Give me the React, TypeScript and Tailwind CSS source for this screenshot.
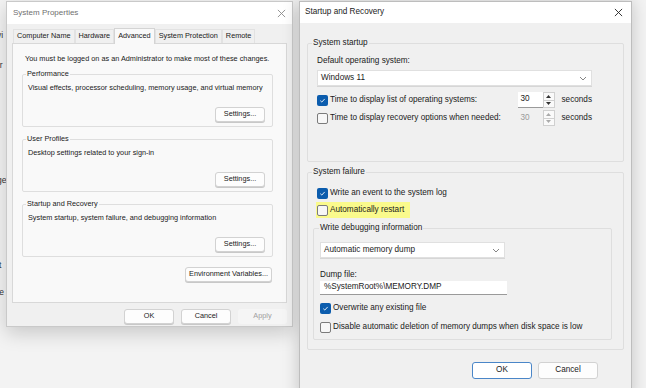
import React from "react";

const font = { fontFamily: '"Liberation Sans", Arial, sans-serif' };

function CloseIcon({ muted }: { muted?: boolean }) {
  return (
    <svg width="9" height="9" viewBox="0 0 10 10" className={muted ? "text-[#8a8a8a]" : "text-[#222]"}>
      <path d="M1 1 L9 9 M9 1 L1 9" stroke="currentColor" strokeWidth="1" fill="none" />
    </svg>
  );
}

function Checkbox({ checked }: { checked?: boolean }) {
  if (checked) {
    return (
      <span className="flex h-[11px] w-[11px] shrink-0 items-center justify-center rounded-[2px] bg-[#0b5cad]">
        <svg width="7" height="7" viewBox="0 0 8 8">
          <path d="M1.5 4.2 L3.2 5.8 L6.5 2.2" stroke="white" strokeWidth="1" fill="none" />
        </svg>
      </span>
    );
  }
  return <span className="h-[11px] w-[11px] shrink-0 rounded-[2px] border border-[#7b7b7b] bg-[#f7f7f7]" />;
}

function Button({ children, w, primary, disabled }: { children: React.ReactNode; w: string; primary?: boolean; disabled?: boolean }) {
  return (
    <div
      className={`flex items-center justify-center whitespace-nowrap rounded-[3px] ${w} ${
        disabled
          ? "h-[15px] bg-[#f5f5f5] text-[#a0a0a0]"
          : primary
          ? "h-[17px] border border-[#4a86c8] bg-white text-[#1a1a1a]"
          : "h-[15px] border border-[#d2d2d2] bg-[#fdfdfd] text-[#1a1a1a] shadow-[0_1px_0_#c8c8c8]"
      }`}
    >
      {children}
    </div>
  );
}

function Chevron() {
  return (
    <svg width="8" height="5" viewBox="0 0 8 5">
      <path d="M1 1 L4 4 L7 1" stroke="#666" strokeWidth="0.8" fill="none" />
    </svg>
  );
}

function Spin({ disabled }: { disabled?: boolean }) {
  return (
    <div className="flex h-[16px]">
      <div className={`flex w-[25px] items-center pl-[3px] ${disabled ? "bg-[#f0f0f0] text-[#9a9a9a]" : "border-b border-[#9a9a9a] bg-white text-[#1a1a1a]"}`}>30</div>
      <div className="flex w-[12px] flex-col border border-[#d0d0d0] bg-[#fafafa]">
        <div className="flex flex-1 items-center justify-center border-b border-[#d0d0d0]">
          <svg width="5" height="3" viewBox="0 0 5 3"><path d="M0 3 L2.5 0 L5 3 Z" fill={disabled ? "#aaa" : "#333"} /></svg>
        </div>
        <div className="flex flex-1 items-center justify-center">
          <svg width="5" height="3" viewBox="0 0 5 3"><path d="M0 0 L2.5 3 L5 0 Z" fill={disabled ? "#aaa" : "#333"} /></svg>
        </div>
      </div>
    </div>
  );
}

// legend is laid out inside the fieldset padding, so pull it back with a negative margin
function Group({ title, className, legend, children }: { title: string; className: string; legend: string; children: React.ReactNode }) {
  return (
    <fieldset className={`rounded-[2px] border border-[#dedede] ${className}`}>
      <legend className={`px-[1px] leading-[10px] ${legend}`}>{title}</legend>
      {children}
    </fieldset>
  );
}

function SystemProperties() {
  const tabs = ["Computer Name", "Hardware", "Advanced", "System Protection", "Remote"];
  return (
    <div className="absolute left-[6px] top-[1px] flex h-[326px] w-[287px] flex-col border border-[#c9c9c9] bg-[#f0f0f0] text-[7.3px] shadow-[0_6px_18px_rgba(0,0,0,0.18)]">
      <div className="flex h-[22px] items-center justify-between bg-white pl-[6px] pr-[6px] text-[#6f6f6f]">
        <span className="text-[8px]">System Properties</span>
        <CloseIcon muted />
      </div>
      <div className="flex h-[19px] items-end pl-[6px] pt-[4px]">
        {tabs.map((t) => (
          <div
            key={t}
            className={`flex items-center px-[3px] ${
              t === "Advanced"
                ? "relative z-10 mb-[-1px] h-[16px] border border-b-0 border-[#d4d4d4] bg-[#f9f9f9]"
                : "h-[14px] border border-b-0 border-[#e2e2e2] bg-[#f0f0f0]"
            }`}
          >
            {t}
          </div>
        ))}
      </div>
      <div className="mx-[5px] flex h-[260px] flex-col border border-[#d8d8d8] bg-[#f9f9f9] pl-[9px] pr-[13px] pt-[9px]">
        <div className="whitespace-nowrap pl-[3px] leading-[12px]">You must be logged on as an Administrator to make most of these changes.</div>
        <Group title="Performance" legend="ml-[-2px]" className="mt-[4px] h-[58px] px-[5px]">
          <div className="mt-[4px] whitespace-nowrap leading-[10px]">Visual effects, processor scheduling, memory usage, and virtual memory</div>
          <div className="mt-[14px] flex justify-end pr-[2px]"><Button w="w-[50px]">Settings...</Button></div>
        </Group>
        <Group title="User Profiles" legend="ml-[-2px]" className="mt-[7px] h-[58px] px-[5px]">
          <div className="mt-[4px] leading-[10px]">Desktop settings related to your sign-in</div>
          <div className="mt-[14px] flex justify-end pr-[2px]"><Button w="w-[50px]">Settings...</Button></div>
        </Group>
        <Group title="Startup and Recovery" legend="ml-[-2px]" className="mt-[7px] h-[58px] px-[5px]">
          <div className="mt-[4px] leading-[10px]">System startup, system failure, and debugging information</div>
          <div className="mt-[14px] flex justify-end pr-[2px]"><Button w="w-[50px]">Settings...</Button></div>
        </Group>
        <div className="mt-[10px] flex justify-end pr-[1px]"><Button w="w-[87px]">Environment Variables...</Button></div>
      </div>
      <div className="mt-[6px] flex justify-end gap-[7px] pr-[5px]">
        <Button w="w-[50px]">OK</Button>
        <Button w="w-[50px]">Cancel</Button>
        <Button w="w-[49px]" disabled>Apply</Button>
      </div>
    </div>
  );
}

function StartupRecovery() {
  return (
    <div className="absolute left-[299px] top-[1px] flex h-[400px] w-[333px] flex-col border border-[#bdbdbd] bg-[#f0f0f0] text-[8.2px] shadow-[0_0_16px_rgba(0,0,0,0.2)]">
      <div className="flex h-[21px] items-center justify-between bg-white pl-[5px] pr-[8px] text-[#1a1a1a]">
        <span>Startup and Recovery</span>
        <CloseIcon />
      </div>
      <div className="flex flex-col px-[7px] pt-[15px]">
        <Group title="System startup" legend="ml-[-5px]" className="h-[124px] pl-[9px] pr-[31px]">
          <div className="mt-[8px] leading-[10px]">Default operating system:</div>
          <div className="mt-[4px] flex h-[16px] items-center justify-between border border-[#e0e0e0] bg-white pl-[3px] pr-[4px] shadow-[0_1px_0_#d6d6d6]">
            <span>Windows 11</span>
            <Chevron />
          </div>
          <div className="mt-[8px] flex h-[12px] items-center">
            <Checkbox checked />
            <span className="ml-[2px]">Time to display list of operating systems:</span>
            <div className="ml-auto flex items-center gap-[7px]">
              <Spin />
              <span>seconds</span>
            </div>
          </div>
          <div className="mt-[6px] flex h-[12px] items-center">
            <Checkbox />
            <span className="ml-[2px]">Time to display recovery options when needed:</span>
            <div className="ml-auto flex items-center gap-[7px]">
              <Spin disabled />
              <span>seconds</span>
            </div>
          </div>
        </Group>
        <Group title="System failure" legend="ml-[-5px]" className="mt-[5px] h-[183px] pl-[9px] pr-[11px]">
          <div className="mt-[10px] flex h-[12px] items-center">
            <Checkbox checked />
            <span className="ml-[2px]">Write an event to the system log</span>
          </div>
          <div className="ml-[-1px] mt-[3px] flex h-[16px] w-[94px] items-center bg-[#fafa8c] pl-[1px]">
            <Checkbox />
            <span className="ml-[2px]">Automatically restart</span>
          </div>
          <Group title="Write debugging information" legend="ml-[-1px]" className="ml-[-4px] mt-[5px] h-[117px] px-[6px]">
            <div className="mt-[9px] flex h-[16px] w-[185px] items-center justify-between border border-[#e0e0e0] bg-white pl-[3px] pr-[4px] shadow-[0_1px_0_#d6d6d6]">
              <span>Automatic memory dump</span>
              <Chevron />
            </div>
            <div className="mt-[12px] leading-[10px]">Dump file:</div>
            <div className="mt-[1px] flex h-[14px] w-[187px] items-center border-b border-[#9a9a9a] bg-white pl-[4px]">%SystemRoot%\MEMORY.DMP</div>
            <div className="mt-[7px] flex h-[12px] items-center">
              <Checkbox checked />
              <span className="ml-[2px]">Overwrite any existing file</span>
            </div>
            <div className="mt-[7px] flex h-[12px] items-center">
              <Checkbox />
              <span className="ml-[2px]">Disable automatic deletion of memory dumps when disk space is low</span>
            </div>
          </Group>
        </Group>
        <div className="mt-[12px] flex justify-end gap-[6px] pr-[26px]">
          <Button w="w-[60px]" primary>OK</Button>
          <div className="flex h-[17px] w-[60px] items-center justify-center rounded-[3px] border border-[#d2d2d2] bg-[#fdfdfd]">Cancel</div>
        </div>
      </div>
    </div>
  );
}

export default function App() {
  return (
    <div style={font} className="relative h-[388px] w-[646px] overflow-hidden bg-[#f3f3f3] text-[8.5px] text-[#1a1a1a]">
      <div className="absolute left-[-3px] top-0 flex h-full flex-col text-[#333]">
        <span className="mt-[29px]">vi</span>
        <span className="mt-[17px]">rr</span>
        <span className="mt-[102px]">ge</span>
        <span className="mt-[73px]">it</span>
        <span className="mt-[14px]">te</span>
      </div>
      <SystemProperties />
      <StartupRecovery />
    </div>
  );
}
